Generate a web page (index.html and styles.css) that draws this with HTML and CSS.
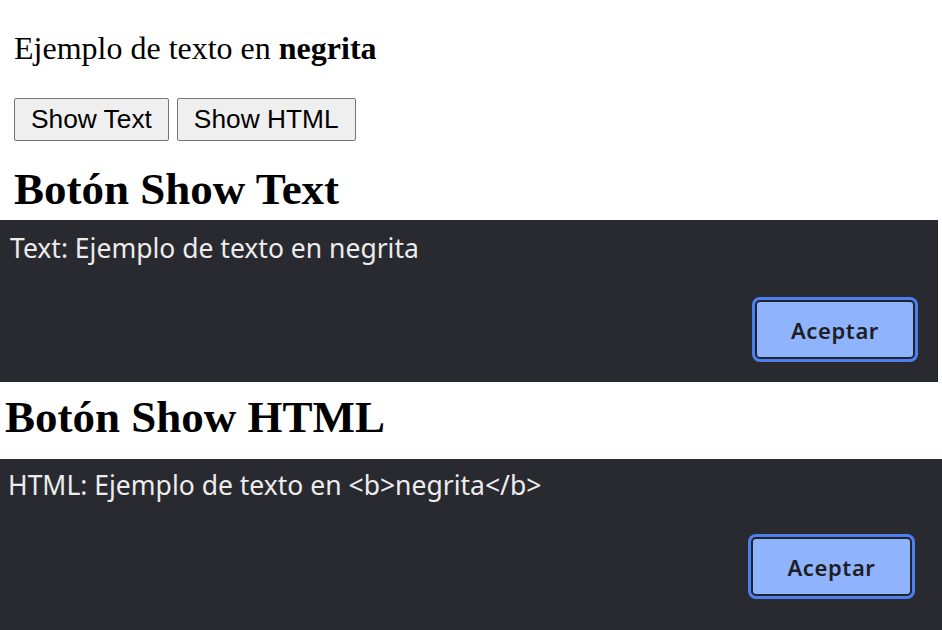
FILE: index.html
```html
<!DOCTYPE html>
<html lang="es">
<head>
<meta charset="utf-8">
<title>Ejemplo</title>
<link rel="stylesheet" href="styles.css">
</head>
<body>
  <div class="top">
    <p class="sample">Ejemplo de texto en <b>negrita</b></p>
    <div class="actions">
      <button class="btn" type="button">Show Text</button>
      <button class="btn" type="button">Show HTML</button>
    </div>
    <h2 class="title">Botón Show Text</h2>
  </div>
  <section class="dialog dialog-text">
    <div class="dialog-msg">Text: Ejemplo de texto en negrita</div>
    <div class="dialog-foot"><button class="ok" type="button">Aceptar</button></div>
  </section>
  <h2 class="title title-html">Botón Show HTML</h2>
  <section class="dialog dialog-html">
    <div class="dialog-msg">HTML: Ejemplo de texto en &lt;b&gt;negrita&lt;/b&gt;</div>
    <div class="dialog-foot"><button class="ok" type="button">Aceptar</button></div>
  </section>
</body>
</html>
```

FILE: styles.css
```css
html, body {
  margin: 0;
  padding: 0;
  background: #ffffff;
}
body {
  width: 942px;
  overflow: hidden;
  font-family: "Liberation Serif", "Times New Roman", serif;
  color: #000;
}
.top {
  padding-left: 14px;
}
.sample {
  margin: 0;
  padding-top: 30px;
  font-size: 32px;
  line-height: 36px;
}
.actions {
  display: flex;
  gap: 8px;
  margin-top: 32px;
}
.btn {
  height: 43px;
  padding: 0 16px;
  border: 1px solid #767676;
  border-radius: 2px;
  background: #efefef;
  font-family: "Liberation Sans", Arial, sans-serif;
  font-size: 26.3px;
  color: #000;
}
.title {
  margin: 0;
  font-family: "Liberation Serif", "Times New Roman", serif;
  font-weight: bold;
  font-size: 45px;
  line-height: 48px;
}
.top .title {
  margin-top: 24px;
  margin-bottom: 7px;
}
.title-html {
  padding-left: 5px;
  margin-top: 11px;
  margin-bottom: 18px;
}
.dialog {
  background: #292a2f;
  color: #ececee;
  font-family: "Noto Sans", "Open Sans", sans-serif;
  display: flex;
  flex-direction: column;
}
.dialog-msg {
  font-size: 26.5px;
  line-height: 34px;
}
.dialog-foot {
  display: flex;
  justify-content: flex-end;
  margin-top: 35px;
}
.dialog-text {
  width: 938px;
  box-sizing: border-box;
  padding: 11px 23px 23px 10px;
}
.dialog-html {
  padding: 9px 30px 40px 8px;
}
.ok {
  width: 160px;
  height: 59px;
  border: 2px solid #22242a;
  border-radius: 5px;
  background: #8fb3fc;
  box-shadow: 0 0 0 3px #4c80f0;
  font-family: "Noto Sans", "Open Sans", sans-serif;
  font-weight: 600;
  font-size: 22px;
  letter-spacing: 0.6px;
  color: #1e1f24;
}
.dialog-html .ok {
  width: 161px;
}
```
